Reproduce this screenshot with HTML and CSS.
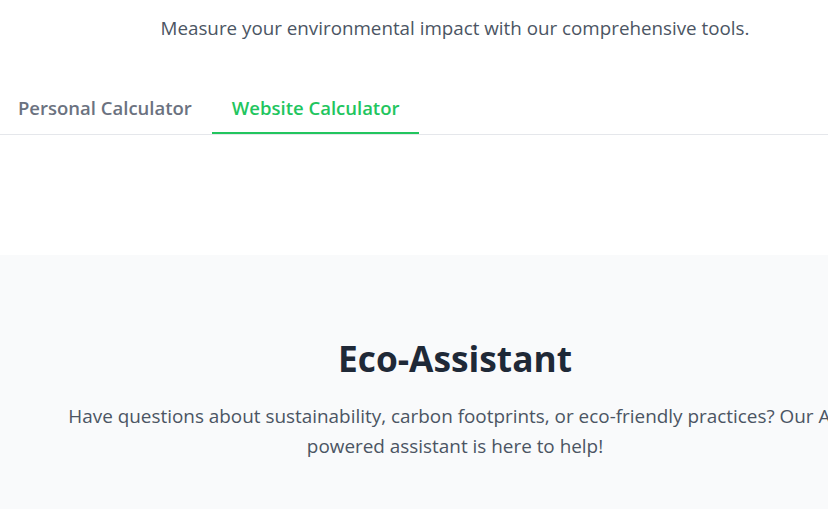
FILE: index.html
```html
<!DOCTYPE html>
<html lang="en">
<head>
<meta charset="utf-8">
<title>Carbon Calculator</title>
<link rel="stylesheet" href="styles.css">
</head>
<body>
<div class="page">
  <section class="calc">
    <p class="lead">Measure your environmental impact with our comprehensive tools.</p>
    <nav class="tabs">
      <button class="tab">Personal Calculator</button>
      <button class="tab active">Website Calculator</button>
    </nav>
    <div class="tab-panel"></div>
  </section>
  <section class="eco">
    <h2 class="eco-title">Eco-Assistant</h2>
    <p class="eco-text">Have questions about sustainability, carbon footprints, or eco-friendly practices? Our AI-powered assistant is here to help!</p>
  </section>
</div>
</body>
</html>
```
FILE: styles.css
```css
html, body { margin: 0; padding: 0; background: #ffffff; }
body { font-family: "Open Sans", "Noto Sans", sans-serif; overflow: hidden; }
.page { width: 910px; }
.calc { background: #ffffff; }
.lead {
  margin: 0;
  padding-top: 14px;
  line-height: 28px;
  font-size: 18.8px;
  color: #4b5563;
  text-align: center;
}
.tabs {
  display: flex;
  margin-top: 38px;
  margin-left: -2px;
  border-bottom: 1px solid #e5e7eb;
}
.tab {
  font-family: inherit;
  background: none;
  border: 0;
  border-bottom: 2px solid transparent;
  padding: 14px 20px 10px;
  line-height: 28px;
  font-size: 18.5px;
  font-weight: 600;
  color: #6b7280;
  cursor: pointer;
}
.tab.active { color: #22c55e; border-bottom-color: #22c55e; }
.tab-panel { height: 120px; }
.eco {
  background: #f9fafb;
  padding: 81px 0 60px;
  text-align: center;
}
.eco-title {
  margin: 0;
  line-height: 44px;
  font-size: 35.3px;
  font-weight: 700;
  color: #1f2937;
}
.eco-text {
  margin: 21px auto 0;
  max-width: 800px;
  line-height: 30px;
  font-size: 18.9px;
  color: #4b5563;
}
```
